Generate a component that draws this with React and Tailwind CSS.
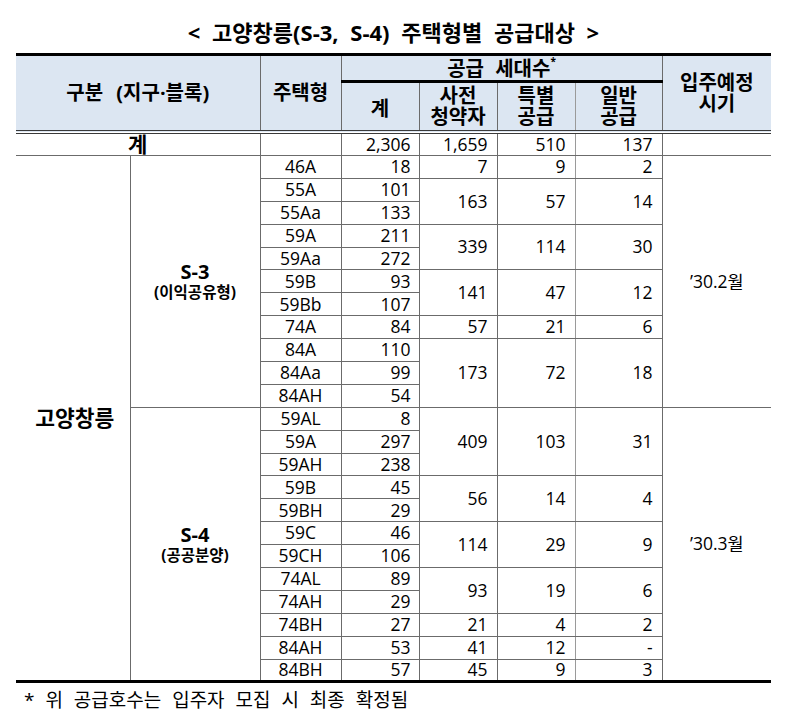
import React from "react";

const FONT = "font-['Open_Sans','Noto_Sans_CJK_KR',sans-serif]";

// rows: [type, count, group] where group = [pre, special, general, span] on first row of a group
const s3 = [
  ["46A", "18", ["7", "9", "2", 1]],
  ["55A", "101", ["163", "57", "14", 2]],
  ["55Aa", "133"],
  ["59A", "211", ["339", "114", "30", 2]],
  ["59Aa", "272"],
  ["59B", "93", ["141", "47", "12", 2]],
  ["59Bb", "107"],
  ["74A", "84", ["57", "21", "6", 1]],
  ["84A", "110", ["173", "72", "18", 3]],
  ["84Aa", "99"],
  ["84AH", "54"],
];

const s4 = [
  ["59AL", "8", ["409", "103", "31", 3]],
  ["59A", "297"],
  ["59AH", "238"],
  ["59B", "45", ["56", "14", "4", 2]],
  ["59BH", "29"],
  ["59C", "46", ["114", "29", "9", 2]],
  ["59CH", "106"],
  ["74AL", "89", ["93", "19", "6", 2]],
  ["74AH", "29"],
  ["74BH", "27", ["21", "4", "2", 1]],
  ["84AH", "53", ["41", "12", "-", 1]],
  ["84BH", "57", ["45", "9", "3", 1]],
];

const cell = "border border-[#6b6b6b] p-0";
const num = `${cell} text-right pr-[9px]`;

function Rows({ rows, block, note, month, first, last }) {
  return rows.map((r, i) => {
    const isLast = last && i === rows.length - 1;
    const bottom = isLast ? "border-b-[3px] border-b-black" : "";
    const grp = r[2];
    const grpBottom = last && grp && i + grp[3] === rows.length ? "border-b-[3px] border-b-black" : "";
    return (
      <tr key={block + i} className="h-[22.9px]">
        {first && i === 0 && (
          <td
            rowSpan={s3.length + s4.length}
            className={`${cell} border-l-0 border-b-[3px] border-b-black pl-[4px] text-center text-[21.5px] font-bold`}
          >
            고양창릉
          </td>
        )}
        {i === 0 && (
          <td rowSpan={rows.length} className={`${cell} text-center ${last ? "border-b-[3px] border-b-black" : ""}`}>
            <div className="text-[20px] font-bold leading-[22px]">{block}</div>
            <div className="text-[15.5px] font-bold leading-[19px]">{note}</div>
          </td>
        )}
        <td className={`${cell} ${bottom} text-center`}>{r[0]}</td>
        <td className={`${cell} ${bottom} text-right pr-[8px]`}>{r[1]}</td>
        {grp && (
          <>
            <td rowSpan={grp[3]} className={`${num} ${grpBottom}`}>{grp[0]}</td>
            <td rowSpan={grp[3]} className={`${num} ${grpBottom} border-r-[#9a9a9a]`}>{grp[1]}</td>
            <td rowSpan={grp[3]} className={`${num} ${grpBottom}`}>{grp[2]}</td>
          </>
        )}
        {i === 0 && (
          <td
            rowSpan={rows.length}
            className={`${cell} border-r-0 text-center ${last ? "border-b-[3px] border-b-black" : ""}`}
          >
            {month}
          </td>
        )}
      </tr>
    );
  });
}

export default function App() {
  const head = `${cell} border-t-[3px] border-t-black bg-[#dce6f2] font-bold text-[20px] leading-[21px] align-middle`;
  const total = `${cell} border-t-[4px] border-t-[#3a3a3a] border-double`;
  return (
    <div className={`w-[800px] h-[726px] bg-white text-black ${FONT}`}>
      <div className="ml-[16px] w-[755px]">
        <div className="h-[53px] pt-[17px] text-center text-[22px] font-bold leading-[30px] [word-spacing:6px]">
          &lt; 고양창릉(S-3, S-4) 주택형별 공급대상 &gt;
        </div>
        <table className="w-[755px] table-fixed border-collapse text-[17.5px] leading-none">
          <colgroup>
            <col className="w-[114px]" />
            <col className="w-[130px]" />
            <col className="w-[81px]" />
            <col className="w-[78px]" />
            <col className="w-[78px]" />
            <col className="w-[78px]" />
            <col className="w-[87px]" />
            <col className="w-[109px]" />
          </colgroup>
          <thead>
            <tr className="h-[27px]">
              <th rowSpan={2} colSpan={2} className={`${head} border-l-0 [word-spacing:8px]`}>
                구분 (지구·블록)
              </th>
              <th rowSpan={2} className={head}>주택형</th>
              <th colSpan={4} className={`${head} [word-spacing:6px]`}>
                공급 세대수<sup className="text-[10px] align-[6px]">*</sup>
              </th>
              <th rowSpan={2} className={`${head} border-r-0`}>
                입주예정
                <br />
                시기
              </th>
            </tr>
            <tr className="h-[50px]">
              <th className={`${head} border-t-[1px] border-t-[#6b6b6b] pt-[4px]`}>계</th>
              <th className={`${head} border-t-[1px] border-t-[#6b6b6b]`}>
                사전
                <br />
                청약자
              </th>
              <th className={`${head} border-t-[1px] border-t-[#6b6b6b] border-r-[#9a9a9a]`}>
                특별
                <br />
                공급
              </th>
              <th className={`${head} border-t-[1px] border-t-[#6b6b6b]`}>
                일반
                <br />
                공급
              </th>
            </tr>
          </thead>
          <tbody>
            <tr className="h-[24px]">
              <td colSpan={2} className={`${total} border-l-0 text-center text-[21px] font-bold`}>계</td>
              <td className={total}></td>
              <td className={`${total} text-right pr-[8px]`}>2,306</td>
              <td className={`${total} text-right pr-[9px]`}>1,659</td>
              <td className={`${total} text-right pr-[9px] border-r-[#9a9a9a]`}>510</td>
              <td className={`${total} text-right pr-[9px]`}>137</td>
              <td className={`${total} border-r-0`}></td>
            </tr>
            <Rows rows={s3} block="S-3" note="(이익공유형)" month="’30.2월" first />
            <Rows rows={s4} block="S-4" note="(공공분양)" month="’30.3월" last />
          </tbody>
        </table>
      </div>
      <div className="pl-[24px] pt-[5px] text-[19px] leading-[24px] [word-spacing:6px]">
        * 위 공급호수는 입주자 모집 시 최종 확정됨
      </div>
    </div>
  );
}
